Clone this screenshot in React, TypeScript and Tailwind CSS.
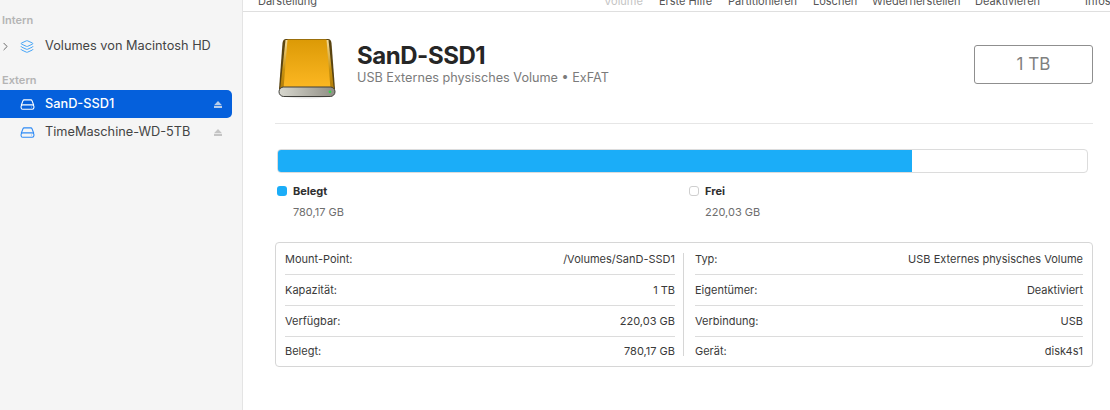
import { ChevronRight, Layers } from "lucide-react"

const tools = [
  { label: "Volume", className: "w-[55px] text-[#c4c4c4]" },
  { label: "Erste Hilfe", className: "w-[69px]" },
  { label: "Partitionieren", className: "w-[85px]" },
  { label: "Löschen", className: "w-[59px]" },
  { label: "Wiederherstellen", className: "w-[103px]" },
  { label: "Deaktivieren", className: "w-[110px]" },
  { label: "Infos", className: "w-[25px]" },
]

const leftRows = [
  ["Mount-Point:", "/Volumes/SanD-SSD1"],
  ["Kapazität:", "1 TB"],
  ["Verfügbar:", "220,03 GB"],
  ["Belegt:", "780,17 GB"],
]

const rightRows = [
  ["Typ:", "USB Externes physisches Volume"],
  ["Eigentümer:", "Deaktiviert"],
  ["Verbindung:", "USB"],
  ["Gerät:", "disk4s1"],
]

const rowHeights = ["h-[32px] pt-[1px] border-b", "h-[31px] border-b", "h-[31px] border-b", "h-[29px]"]

const DriveGlyph = ({ className }: { className: string }) => (
  <svg viewBox="0 0 16 12" fill="none" stroke="currentColor" strokeWidth="1.2" className={className}>
    <path d="M1.2 6.8 L3 2 Q3.3 1 4.4 1 H11.6 Q12.7 1 13 2 L14.8 6.8" />
    <rect x="1" y="6.4" width="14" height="4.8" rx="1.8" />
    <circle cx="12.4" cy="8.8" r="0.5" fill="currentColor" stroke="none" />
  </svg>
)

const Eject = ({ className }: { className: string }) => (
  <svg viewBox="0 0 8 7" fill="currentColor" className={className}>
    <path d="M4 0 L8 4.2 H0 Z" />
    <rect x="0" y="5" width="8" height="2" />
  </svg>
)

const HardDrive = () => (
  <svg viewBox="0 0 60 62" className="w-[60px] h-[62px] shrink-0">
    <defs>
      <linearGradient id="body" x1="0" y1="0" x2="0" y2="1">
        <stop offset="0" stopColor="#dc9a06" />
        <stop offset="1" stopColor="#fdb823" />
      </linearGradient>
      <linearGradient id="edge" x1="0" y1="0" x2="0" y2="1">
        <stop offset="0" stopColor="#f4dc9c" />
        <stop offset="0.6" stopColor="#c8920f" />
        <stop offset="1" stopColor="#b07c0a" />
      </linearGradient>
      <linearGradient id="base" x1="0" y1="0" x2="1" y2="0">
        <stop offset="0" stopColor="#d8d8cf" />
        <stop offset="1" stopColor="#8f8d84" />
      </linearGradient>
    </defs>
    <ellipse cx="30" cy="57" rx="28" ry="4.5" fill="#00000018" />
    <path d="M9 2 H51 Q54 2 54.5 6 L58 52 H2 L5.5 6 Q6 2 9 2 Z" fill="#5a4410" />
    <path d="M8.5 3 H51.5 L56.8 52 H3.2 Z" fill="url(#edge)" />
    <path d="M10.5 2.5 H49.5 L53.5 52 H6.5 Z" fill="url(#body)" />
    <rect x="2" y="50" width="56" height="9.5" rx="4.7" fill="url(#base)" stroke="#3f3f3a" strokeWidth="1" />
    <circle cx="53" cy="54.8" r="1.4" fill="#35d44a" />
  </svg>
)

const InfoColumn = ({ rows, className }: { rows: string[][]; className: string }) => (
  <div className={`flex flex-col ${className}`}>
    {rows.map(([label, value], i) => (
      <div key={label} className={`flex items-center justify-between border-[#dcdcdc] ${rowHeights[i]}`}>
        <span>{label}</span>
        <span>{value}</span>
      </div>
    ))}
  </div>
)

export default function App() {
  return (
    <div className="flex w-[1110px] h-[410px] overflow-hidden bg-white text-[#3a3a3a] font-['Inter',sans-serif]">
      <aside className="w-[243px] shrink-0 bg-[#f5f5f5] border-r border-[#e4e4e4] pt-[14px] pr-[10px]">
        <div className="pl-[2px] text-[11px] leading-[13px] font-semibold text-[#b4b4b4]">Intern</div>
        <div className="flex items-center h-[28px] mt-[5px] text-[12.75px] text-[#444]">
          <ChevronRight className="-ml-px mr-px w-[13px] h-[13px] text-[#666]" strokeWidth={1.8} />
          <Layers className="ml-[7px] w-[14px] h-[15px] text-[#45a4f7]" strokeWidth={1.7} />
          <span className="ml-[11px]">Volumes von Macintosh HD</span>
        </div>
        <div className="pl-[2px] mt-[14px] text-[11px] leading-[13px] font-semibold text-[#b4b4b4]">Extern</div>
        <div className="flex items-center h-[28px] mt-[3px] rounded-r-[5px] bg-[#0560dc] text-[12.75px] font-medium text-white">
          <DriveGlyph className="ml-[20px] w-[15px] h-[11px]" />
          <span className="ml-[10px] flex-1">SanD-SSD1</span>
          <Eject className="mr-[10px] w-[8px] h-[7px] text-[#b8cdea]" />
        </div>
        <div className="flex items-center h-[28px] text-[12.75px] text-[#444]">
          <DriveGlyph className="ml-[20px] w-[15px] h-[11px] text-[#2f8bf5]" />
          <span className="ml-[10px] flex-1">TimeMaschine-WD-5TB</span>
          <Eject className="mr-[10px] w-[8px] h-[7px] text-[#c4c4c4]" />
        </div>
      </aside>

      <main className="flex-1 min-w-0 flex flex-col">
        <header className="h-[12px] shrink-0 overflow-hidden border-b border-[#dfdfdf] text-[11px] leading-[12px] text-[#555]">
          <div className="flex -mt-[5px] pl-[15px]">
            <span className="w-[346px]">Darstellung</span>
            {tools.map((tool) => (
              <span key={tool.label} className={`whitespace-nowrap ${tool.className}`}>{tool.label}</span>
            ))}
          </div>
        </header>

        <div className="flex-1 pl-[32px] pr-[17px]">
          <div className="flex items-start h-[112px] border-b border-[#e6e6e6] pl-[2px] pt-[25px]">
            <HardDrive />
            <div className="ml-[20px] pt-[4px]">
              <h1 className="text-[24px] leading-[30px] font-bold tracking-[-0.45px] text-[#262626]">SanD-SSD1</h1>
              <p className="text-[12.65px] leading-[16px] -mt-[1px] text-[#7b7b7b]">USB Externes physisches Volume • ExFAT</p>
            </div>
            <div className="ml-auto mt-[8px] flex items-center justify-center w-[119px] h-[39px] rounded-[3px] border border-[#8f8f8f] text-[17px] text-[#808080]">
              1 TB
            </div>
          </div>

          <div className="mt-[25px] ml-[2px] mr-[5px] h-[24px] rounded-[4px] border border-[#dcdcdc] overflow-hidden">
            <div className="h-full w-[78.4%] bg-[#1badf8]"></div>
          </div>

          <div className="flex mt-[11px] ml-[2px]">
            <div className="w-[412px]">
              <div className="flex items-center h-[14px] text-[11px] font-bold text-[#2f2f2f]">
                <span className="w-[10px] h-[10px] rounded-[3px] bg-[#1badf8]"></span>
                <span className="ml-[6px]">Belegt</span>
              </div>
              <div className="mt-[7px] ml-[16px] text-[11px] leading-[14px] text-[#6e6e6e]">780,17 GB</div>
            </div>
            <div>
              <div className="flex items-center h-[14px] text-[11px] font-bold text-[#2f2f2f]">
                <span className="w-[10px] h-[10px] rounded-[3px] border border-[#cfcfcf]"></span>
                <span className="ml-[6px]">Frei</span>
              </div>
              <div className="mt-[7px] ml-[16px] text-[11px] leading-[14px] text-[#6e6e6e]">220,03 GB</div>
            </div>
          </div>

          <div className="flex mt-[23px] w-[818px] h-[125px] rounded-[4px] border border-[#d6d6d6] text-[11px] text-[#3a3a3a]">
            <InfoColumn rows={leftRows} className="w-[407px] pl-[9px] pr-[8px]" />
            <div className="w-px my-[10px] bg-[#d6d6d6]"></div>
            <InfoColumn rows={rightRows} className="flex-1 pl-[11px] pr-[9px]" />
          </div>
        </div>
      </main>
    </div>
  )
}
